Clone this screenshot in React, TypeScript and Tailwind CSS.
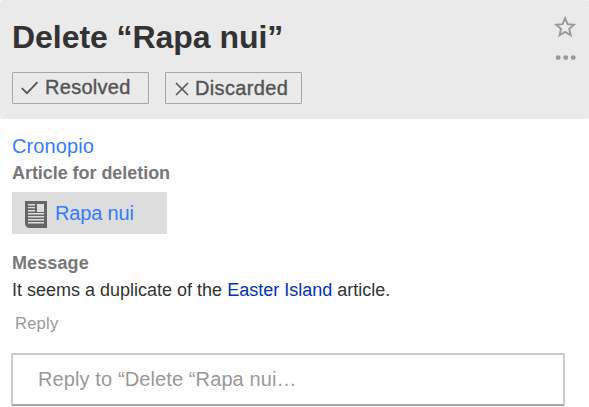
import React from "react";

function Star() {
  return (
    <svg width="24" height="24" viewBox="0 0 24 24" className="block" fill="none" stroke="#999" strokeWidth="1.9">
      <path d="M12.1 3.2 14.6 9.1 21 9.7 16.2 13.9 17.7 20.3 12.1 16.9 6.5 20.3 8 13.9 3.2 9.7 9.6 9.1Z" />
    </svg>
  );
}

function Dots() {
  return (
    <svg width="21" height="6" viewBox="0 0 21 6" className="block" fill="#999">
      <circle cx="3.2" cy="2.6" r="2.45" />
      <circle cx="10.7" cy="2.6" r="2.45" />
      <circle cx="18.2" cy="2.6" r="2.45" />
    </svg>
  );
}

function Article() {
  return (
    <svg width="22" height="27" viewBox="0 0 22 27" className="mt-px block shrink-0">
      <path d="M0 0H22V27H5Q0 27 0 22Z" fill="#666" />
      <g fill="#ddd">
        <path d="M3 3H10V4.4H3ZM3 5.9H10V7.3H3ZM3 9H10V10.4H3ZM12 3H19V11H12ZM3 12.1H19V13.5H3ZM3 15.1H19V16.5H3ZM3 18.1H19V19.5H3ZM3 21.1H19V22.5H3Z" />
      </g>
    </svg>
  );
}

export default function App() {
  return (
    <main className="flex h-[407px] w-[589px] flex-col overflow-hidden bg-white font-['Liberation_Sans',Arial,sans-serif]">
      <header className="flex h-[119px] shrink-0 justify-between rounded-[3px] bg-[#eaeaea] pl-3 pr-3">
        <div>
          <h1 className="mt-[17px] h-10 whitespace-nowrap text-[32px] font-bold leading-10 tracking-[-0.05px] text-[#333]">Delete “Rapa nui”</h1>
          <div className="mt-[15px] flex gap-4">
            <button className="flex h-8 w-[137px] items-center rounded-[1px] border border-[#a6a6a6] pl-2">
              <svg width="18" height="14" viewBox="0 0 18 14" className="shrink-0" fill="none" stroke="#555" strokeWidth="1.8">
                <path d="M.8 7.2 6 12.2 16.4 1.2" />
              </svg>
              <span className="-mt-0.5 ml-[6px] text-[20px] leading-[30px] tracking-[0.28px] text-[#555] [-webkit-text-stroke:0.4px_#555]">Resolved</span>
            </button>
            <button className="flex h-8 w-[137px] items-center rounded-[1px] border border-[#a6a6a6] pl-[9px]">
              <svg width="14" height="14" viewBox="0 0 14 14" className="mt-0.5 shrink-0" fill="none" stroke="#555" strokeWidth="1.6">
                <path d="M1 1 13 13M13 1 1 13" />
              </svg>
              <span className="ml-[6px] text-[20px] leading-[30px] tracking-[0.35px] text-[#555] [-webkit-text-stroke:0.4px_#555]">Discarded</span>
            </button>
          </div>
        </div>
        <div className="flex w-6 flex-col items-center pt-[15px]">
          <Star />
          <div className="mt-4"><Dots /></div>
        </div>
      </header>
      <section className="flex flex-col items-start pl-3">
        <a className="mt-[13px] h-7 text-[20px] leading-7 tracking-[0.1px] text-[#347bff]">Cronopio</a>
        <h2 className="h-6 text-[18px] font-bold leading-[26px] tracking-[-0.05px] text-[#777]">Article for deletion</h2>
        <div className="mt-2 flex h-[42px] w-[155px] items-center bg-[#ddd] pl-[13px] pt-px">
          <Article />
          <a className="-mt-0.5 ml-2 whitespace-nowrap text-[20px] leading-[30px] tracking-[-0.15px] text-[#347bff]">Rapa nui</a>
        </div>
        <h2 className="mt-[17px] h-6 text-[18px] font-bold leading-6 tracking-[0.1px] text-[#777]">Message</h2>
        <p className="mt-[3px] h-6 whitespace-nowrap text-[18px] leading-6 text-[#333]">
          It seems a duplicate of the <a className="text-[#0033bb]">Easter Island</a> article.
        </p>
        <button className="ml-[3px] mt-[9px] h-6 text-[16.5px] leading-6 tracking-[0.25px] text-[#999]">Reply</button>
        <input
          className="-ml-px mt-[18px] block h-[53px] w-[554px] rounded-[1px] border-2 border-[#ccc] border-b-[#a6a6a6] pl-[25px] text-[20px] tracking-[0.11px] placeholder:text-[#999] placeholder:opacity-100"
          placeholder="Reply to “Delete “Rapa nui…"
        />
      </section>
    </main>
  );
}
